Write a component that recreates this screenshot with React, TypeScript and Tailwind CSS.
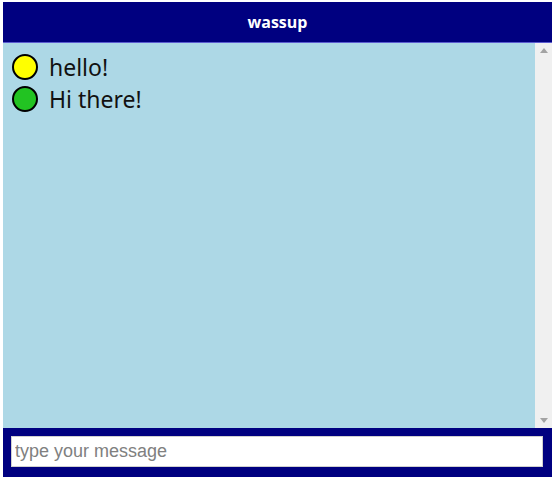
export default function App() {
  const messages = [
    { color: "bg-[#ffff00]", text: "hello!" },
    { color: "bg-[#22c322]", text: "Hi there!" },
  ];

  return (
    <div className="w-[556px] h-[480px] bg-white pt-[2px] pl-[3px]" style={{ fontFamily: '"Open Sans", "Noto Sans", sans-serif' }}>
      <div className="w-[549px] flex flex-col">
        <div className="h-[41px] bg-[#000080] flex items-center justify-center text-white font-bold text-[16px] border-b border-[#5b5bd0]">
          wassup
        </div>
        <div className="h-[385px] flex bg-[#add8e6]">
          <div className="flex-1 pt-[11px] pl-[9px] flex flex-col gap-[6px]">
            {messages.map((m) => (
              <div key={m.text} className="flex items-center h-[26px]">
                <div className={`w-[26px] h-[26px] rounded-full border-2 border-black ${m.color}`} />
                <span className="ml-[11px] text-[23px] text-[#111] leading-none" style={{ fontFamily: '"Noto Sans", sans-serif' }}>
                  {m.text}
                </span>
              </div>
            ))}
          </div>
          <div className="w-[17px] bg-[#f0f0f0] flex flex-col items-center justify-between py-[5px]">
            <svg width="8" height="5" viewBox="0 0 8 5">
              <path d="M0 5 L4 0 L8 5 Z" fill="#a3a3a3" />
            </svg>
            <svg width="8" height="5" viewBox="0 0 8 5">
              <path d="M0 0 L8 0 L4 5 Z" fill="#a3a3a3" />
            </svg>
          </div>
        </div>
        <div className="h-[49px] bg-[#000080] px-[8px] pt-[8px]">
          <input
            placeholder="type your message"
            className="w-[532px] h-[31px] bg-white border border-[#d0d0d0] px-[3px] text-[18px] text-black placeholder:text-[#808080] outline-none"
            style={{ fontFamily: '"Liberation Sans", Arial, sans-serif' }}
          />
        </div>
      </div>
    </div>
  );
}
